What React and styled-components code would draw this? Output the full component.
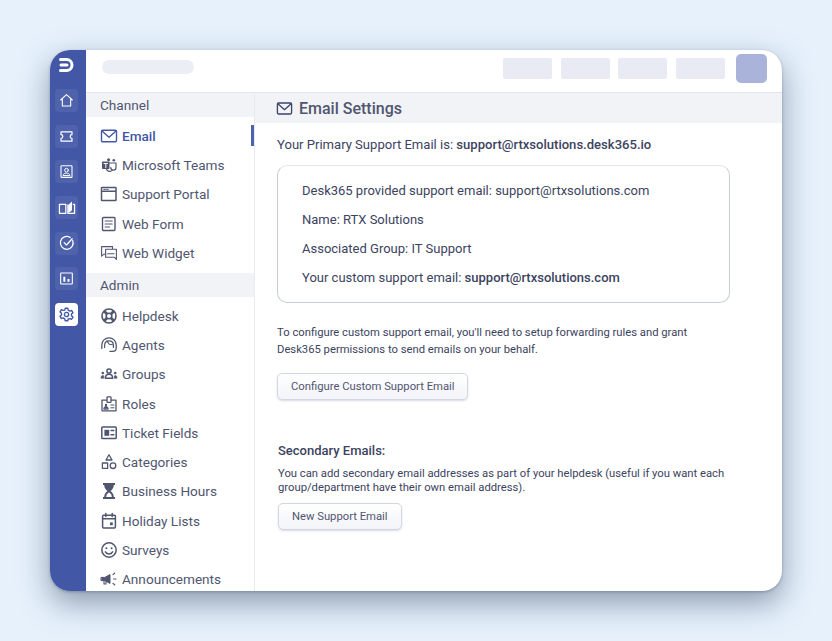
import styled, { createGlobalStyle } from "styled-components";

const GlobalStyle = createGlobalStyle`
    html, body {
        margin: 0;
        padding: 0;
        background-color: #e6f1fc;
    }
    * {
        box-sizing: border-box;
    }
`;

function Svg({ size = 18, children }) {
    return (
        <svg width={size} height={size} viewBox="0 0 18 18" fill="none" stroke="currentColor" strokeWidth="1.4" strokeLinecap="round" strokeLinejoin="round">
            {children}
        </svg>
    );
}

const MailIcon = ({ size }) => (
    <Svg size={size}>
        <rect x="1.5" y="3.2" width="15" height="11.6" rx="1.2" />
        <path d="M2 4l7 6.2L16 4" />
    </Svg>
);
const TeamsIcon = () => (
    <Svg>
        <rect x="2" y="5.5" width="7.5" height="7.5" rx="0.8" fill="currentColor" stroke="none" />
        <path d="M4 7.5h3.5M5.8 7.5v4" stroke="#fff" strokeWidth="1" />
        <path d="M9.5 7h6.5v4.5a2.6 2.6 0 0 1-5.2 0M6.5 13.2a3.4 3.4 0 0 0 5.4 1.4" strokeWidth="1.2" />
        <circle cx="8.6" cy="3.8" r="1.5" fill="currentColor" stroke="none" />
        <circle cx="13.8" cy="4.2" r="1.3" fill="currentColor" stroke="none" />
    </Svg>
);
const PortalIcon = () => (
    <Svg>
        <rect x="1.5" y="2.5" width="14.5" height="13" rx="0.6" strokeWidth="1.5" />
        <path d="M2 6.3h13.5" strokeWidth="1.5" />
        <path d="M3.8 4.4h1.6M6.6 4.4h1.6" strokeWidth="1" />
    </Svg>
);
const FormIcon = () => (
    <Svg>
        <rect x="2.5" y="2.5" width="12.5" height="13" rx="1" />
        <path d="M5.2 6h7M5.2 9h7M5.2 12h4.4" strokeWidth="1.2" />
    </Svg>
);
const WidgetIcon = () => (
    <Svg>
        <path d="M12.5 4.5V2.6H1.6v9.6l2-1.9h2.2" strokeWidth="1.1" />
        <path d="M5.6 5.2h10.8v10.2l-2.2-2.2H5.6z" strokeWidth="1.1" />
        <path d="M7.6 9.8h6.4" strokeWidth="1.1" />
    </Svg>
);
const HelpdeskIcon = () => (
    <Svg>
        <circle cx="9" cy="9" r="7" strokeWidth="1.6" />
        <circle cx="9" cy="9" r="2.8" strokeWidth="1.6" />
        <path d="M4 4l3 3M14 4l-3 3M4 14l3-3M14 14l-3-3" strokeWidth="2.6" strokeLinecap="butt" />
    </Svg>
);
const AgentIcon = () => (
    <Svg>
        <path d="M1.8 12.4V9a7.2 7.2 0 0 1 14.4 0v3.2a3.2 3.2 0 0 1-3.2 3.2H10" strokeWidth="1.3" />
        <path d="M4.6 11.4V9.2c0-2.6 1.8-4.4 4.4-4.4s4.4 1.8 4.4 4.4v2.2" strokeWidth="1.2" />
        <path d="M6.8 5l2.4 3.2 3.2.6" strokeWidth="1.1" />
    </Svg>
);
const GroupsIcon = () => (
    <Svg>
        <circle cx="9" cy="6" r="2.1" strokeWidth="1.5" />
        <path d="M5.4 13.2c0-2.6 1.5-3.9 3.6-3.9s3.600 1.300 3.600 3.900z" strokeWidth="1.5" />
        <circle cx="2.8" cy="8" r="1.3" fill="currentColor" stroke="none" />
        <circle cx="15.2" cy="8" r="1.3" fill="currentColor" stroke="none" />
        <path d="M1 13c0-1.8.6-2.6 1.800-2.600S3.800 11 3.800 13zM14.200 13c0-2 .5-2.600 1-2.600 1.200 0 1.800.8 1.800 2.600z" fill="currentColor" strokeWidth="0.6" />
    </Svg>
);
const RolesIcon = () => (
    <Svg>
        <path d="M6.6 5.2H2v10.6h14V5.2h-4.6" strokeWidth="1.3" />
        <rect x="7" y="1.8" width="4" height="5.6" rx="0.6" strokeWidth="1.3" />
        <circle cx="6" cy="10" r="1.2" fill="currentColor" stroke="none" />
        <path d="M3.8 13.8c0-1.6 1-2.2 2.2-2.2s2.2.6 2.2 2.2zM10.8 10h3.2M10.8 12.800h3.200" fill="currentColor" strokeWidth="1" />
    </Svg>
);
const FieldsIcon = () => (
    <Svg>
        <rect x="1.8" y="3" width="14.4" height="11.6" rx="0.8" strokeWidth="1.5" />
        <rect x="4.4" y="5.8" width="4.8" height="6" fill="currentColor" stroke="none" />
        <path d="M11 6.6h2.8M11 10.8h2.8" strokeWidth="1.5" />
    </Svg>
);
const CategoriesIcon = () => (
    <Svg>
        <path d="M9 1.8l3 5.200H6z" strokeWidth="1.3" />
        <rect x="2.4" y="10" width="5.2" height="5.4" strokeWidth="1.3" />
        <circle cx="13" cy="12.7" r="2.8" strokeWidth="1.3" />
    </Svg>
);
const HourglassIcon = () => (
    <svg width="18" height="18" viewBox="0 0 18 18" fill="currentColor">
        <path d="M3 1h12v2h-1.2c0 3-1.600 4.600-3.300 6 1.700 1.400 3.300 3 3.300 6H15v2H3v-2h1.200c0-3 1.600-4.600 3.300-6-1.700-1.400-3.300-3-3.300-6H3z" />
        <path d="M6.200 15c0-2 1.200-3.400 2.800-4.400 1.600 1 2.800 2.400 2.800 4.400z" fill="#fff" />
    </svg>
);
const HolidayIcon = () => (
    <Svg>
        <rect x="2.6" y="3.2" width="12.8" height="12.8" rx="1" strokeWidth="1.5" />
        <path d="M3 6.800h12M5.800 1.600v3M12.200 1.600v3" strokeWidth="1.5" />
        <rect x="10" y="10.4" width="2.8" height="2.8" fill="currentColor" stroke="none" />
    </Svg>
);
const SmileIcon = () => (
    <Svg>
        <circle cx="9" cy="9" r="7.2" strokeWidth="1.5" />
        <circle cx="6.4" cy="7.2" r="1" fill="currentColor" stroke="none" />
        <circle cx="11.6" cy="7.2" r="1" fill="currentColor" stroke="none" />
        <path d="M5.400 10.800c.9 1.600 2.100 2.200 3.600 2.200s2.700-.6 3.600-2.200" strokeWidth="1.5" />
    </Svg>
);
const MegaphoneIcon = () => (
    <Svg>
        <path d="M1.400 7.400h3.400L10 4.600v8.800L4.800 10.600H1.400z" fill="currentColor" strokeWidth="1" />
        <path d="M4 11v3h2v-2.600" strokeWidth="1.1" />
        <path d="M13 4.600l1.600-1.400M13.600 9H16M13 13.400l1.600 1.400" strokeWidth="1.2" />
    </Svg>
);

const LogoIcon = () => (
    <svg width="17" height="16" viewBox="0 0 17 16" fill="none" stroke="#fff" strokeWidth="3" strokeLinecap="round">
        <path d="M2.500 2.500h6a5.500 5.500 0 0 1 0 11h-6" />
        <path d="M3 8h6" />
    </svg>
);
const RailHome = () => (
    <Svg size={15}>
        <path d="M2 8.400L9 2l7 6.400M4 7v8.600h10V7" strokeWidth="1.3" />
    </Svg>
);
const RailTicket = () => (
    <Svg size={15}>
        <path d="M2.400 3.400h13.200v3.400a2.200 2.200 0 0 0 0 4.400v3.400H2.400v-3.400a2.200 2.200 0 0 0 0-4.400z" strokeWidth="1.4" />
    </Svg>
);
const RailContact = () => (
    <Svg size={15}>
        <rect x="2.4" y="2" width="13.2" height="14" rx="0.8" strokeWidth="1.3" />
        <circle cx="9" cy="7.4" r="2.2" strokeWidth="1.2" />
        <path d="M5 13.400c.4-1.800 2-2.400 4-2.400s3.600.6 4 2.400z" strokeWidth="1.2" />
    </Svg>
);
const RailBook = () => (
    <svg width="18" height="16" viewBox="0 0 20 18" fill="none" stroke="currentColor" strokeWidth="1.4" strokeLinejoin="round">
        <path d="M1.500 5h7.200v10H1.500zM11 5v10h7.500V5h-2" />
        <path d="M11.400 15V5.500L15.600 1.600V11.400z" fill="currentColor" stroke="none" />
    </svg>
);
const RailCheck = () => (
    <Svg size={16}>
        <path d="M15.400 6.200A7.200 7.200 0 1 1 12.600 2.800" strokeWidth="1.4" />
        <path d="M5.800 8.600l2.600 2.600 6.400-7" strokeWidth="1.4" />
    </Svg>
);
const RailChart = () => (
    <Svg size={15}>
        <rect x="2" y="2.4" width="14" height="13.2" rx="0.6" strokeWidth="1.3" />
        <path d="M6.400 13V7M11.400 13V9.600" strokeWidth="2.4" strokeLinecap="butt" />
    </Svg>
);
const RailGear = () => (
    <svg width="15" height="15" viewBox="0 0 24 24" fill="none" stroke="currentColor" strokeWidth="2.2" strokeLinejoin="round">
        <path d="M10 2h4l.7 3 2.600 1.500 3-.9 2 3.400-2.300 2.100v3l2.300 2.100-2 3.400-3-.9L14.700 19l-.7 3h-4l-.7-3-2.600-1.500-3 .9-2-3.400L4 12.900v-3L1.700 7.800l2-3.400 3 .9L9.300 5z" />
        <circle cx="12" cy="12" r="3.4" />
    </svg>
);

const railItems = [RailHome, RailTicket, RailContact, RailBook, RailCheck, RailChart];

const channelItems = [
    { label: "Email", Icon: MailIcon, active: true },
    { label: "Microsoft Teams", Icon: TeamsIcon },
    { label: "Support Portal", Icon: PortalIcon },
    { label: "Web Form", Icon: FormIcon },
    { label: "Web Widget", Icon: WidgetIcon },
];

const adminItems = [
    { label: "Helpdesk", Icon: HelpdeskIcon },
    { label: "Agents", Icon: AgentIcon },
    { label: "Groups", Icon: GroupsIcon },
    { label: "Roles", Icon: RolesIcon },
    { label: "Ticket Fields", Icon: FieldsIcon },
    { label: "Categories", Icon: CategoriesIcon },
    { label: "Business Hours", Icon: HourglassIcon },
    { label: "Holiday Lists", Icon: HolidayIcon },
    { label: "Surveys", Icon: SmileIcon },
    { label: "Announcements", Icon: MegaphoneIcon },
];

function NavList({ items }) {
    return (
        <NavGroup>
            {items.map(({ label, Icon, active }) => (
                <NavItem key={label} $active={active}>
                    <NavIcon><Icon /></NavIcon>
                    {label}
                </NavItem>
            ))}
        </NavGroup>
    );
}

export default function App() {
    return (
        <Page>
            <GlobalStyle />
            <Window>
                <Rail>
                    <Logo><LogoIcon /></Logo>
                    {railItems.map((Icon, i) => (
                        <RailButton key={i}><Icon /></RailButton>
                    ))}
                    <RailButton $active><RailGear /></RailButton>
                </Rail>
                <Body>
                    <TopBar>
                        <SearchPill />
                        <TopActions>
                            <TopAction />
                            <TopAction />
                            <TopAction />
                            <TopAction />
                            <Avatar />
                        </TopActions>
                    </TopBar>
                    <Columns>
                        <Sidebar>
                            <SectionTitle>Channel</SectionTitle>
                            <NavList items={channelItems} />
                            <SectionTitle>Admin</SectionTitle>
                            <NavList items={adminItems} />
                        </Sidebar>
                        <Main>
                            <MainHeader>
                                <MailIcon size={17} />
                                <MainTitle>Email Settings</MainTitle>
                            </MainHeader>
                            <Content>
                                <PrimaryLine>Your Primary Support Email is: <b>support@rtxsolutions.desk365.io</b></PrimaryLine>
                                <InfoBox>
                                    <InfoLine>Desk365 provided support email: support@rtxsolutions.com</InfoLine>
                                    <InfoLine>Name: RTX Solutions</InfoLine>
                                    <InfoLine>Associated Group: IT Support</InfoLine>
                                    <InfoLine>Your custom support email: <b>support@rtxsolutions.com</b></InfoLine>
                                </InfoBox>
                                <Paragraph>
                                    To configure custom support email, you'll need to setup forwarding rules and grant<br />
                                    Desk365 permissions to send emails on your behalf.
                                </Paragraph>
                                <Button>Configure Custom Support Email</Button>
                                <Secondary>
                                    <SecondaryTitle>Secondary Emails:</SecondaryTitle>
                                    <SecondaryText>
                                        You can add secondary email addresses as part of your helpdesk (useful if you want each<br />
                                        group/department have their own email address).
                                    </SecondaryText>
                                    <Button>New Support Email</Button>
                                </Secondary>
                            </Content>
                        </Main>
                    </Columns>
                </Body>
            </Window>
        </Page>
    );
}

const Page = styled.div`
    width: 832px;
    height: 641px;
    padding: 50px;
    overflow: hidden;
    background-color: #e6f1fc;
    font-family: Roboto, "Liberation Sans", sans-serif;
`;

const Window = styled.div`
    width: 732px;
    height: 541px;
    display: flex;
    border-radius: 20px;
    overflow: hidden;
    background-color: #ffffff;
    box-shadow: 0 12px 30px rgba(50, 70, 100, 0.5), 0 1px 3px rgba(50, 70, 100, 0.35);
`;

const Rail = styled.div`
    width: 36px;
    flex-shrink: 0;
    padding-right: 3px;
    display: flex;
    flex-direction: column;
    align-items: center;
    background-color: #4257a5;
`;

const Logo = styled.div`
    height: 39px;
    padding-top: 7px;
    display: flex;
    align-items: flex-start;
    justify-content: center;
`;

const RailButton = styled.div`
    width: 23px;
    height: 23px;
    margin-bottom: 12.7px;
    display: flex;
    align-items: center;
    justify-content: center;
    flex-shrink: 0;
    border-radius: 4px;
    color: ${props => props.$active ? "#4257a5" : "#ffffff"};
    background-color: ${props => props.$active ? "#ffffff" : "#4f63ad"};
`;

const Body = styled.div`
    flex: 1;
    min-width: 0;
    display: flex;
    flex-direction: column;
`;

const TopBar = styled.div`
    height: 43px;
    flex-shrink: 0;
    display: flex;
    align-items: flex-start;
    justify-content: space-between;
    border-bottom: 1px solid #e3e5ec;
`;

const SearchPill = styled.div`
    width: 92px;
    height: 14px;
    margin: 10px 0 0 16px;
    border-radius: 7px;
    background-color: #eceef5;
`;

const TopActions = styled.div`
    display: flex;
    align-items: flex-start;
    padding: 4px 15px 0 0;
`;

const TopAction = styled.div`
    width: 49px;
    height: 21px;
    margin: 4px 8.67px 0 0;
    border-radius: 2px;
    background-color: #e8ebf4;
`;

const Avatar = styled.div`
    width: 31px;
    height: 29px;
    margin-left: 2.33px;
    border-radius: 5px;
    background-color: #aab4da;
`;

const Columns = styled.div`
    flex: 1;
    min-height: 0;
    display: flex;
`;

const Sidebar = styled.div`
    width: 169px;
    flex-shrink: 0;
    overflow: hidden;
    border-right: 1px solid #e8eaf0;
`;

const SectionTitle = styled.div`
    height: 24px;
    padding-left: 14px;
    font-size: 13.6px;
    line-height: 24px;
    color: #50566f;
    background-color: #f2f3f7;
`;

const NavGroup = styled.div`
    padding: 4.1px 0 5.4px;
`;

const NavItem = styled.div`
    position: relative;
    height: 29.3px;
    display: flex;
    align-items: center;
    font-size: 13.6px;
    font-weight: ${props => props.$active ? 500 : 400};
    color: ${props => props.$active ? "#4257a5" : "#50566f"};
    ${props => props.$active && `
        &::after {
            content: "";
            position: absolute;
            top: 4px;
            right: 0;
            width: 3px;
            height: 21px;
            background-color: #4f63ad;
        }
    `}
`;

const NavIcon = styled.span`
    width: 36px;
    padding-left: 14px;
    display: flex;
    align-items: center;
    flex-shrink: 0;
`;

const Main = styled.div`
    flex: 1;
    min-width: 0;
`;

const MainHeader = styled.div`
    height: 30px;
    padding-left: 21px;
    display: flex;
    align-items: center;
    gap: 6px;
    color: #3c4468;
    background-color: #f2f3f7;
`;

const MainTitle = styled.div`
    font-size: 16px;
    font-weight: 500;
    color: #50566f;
`;

const Content = styled.div`
    padding: 14px 0 0 22px;
    color: #3c4360;
`;

const PrimaryLine = styled.div`
    font-size: 13.07px;
    line-height: 16px;
    b {
        font-weight: 500;
    }
`;

const InfoBox = styled.div`
    width: 453px;
    height: 138px;
    margin-top: 12px;
    padding: 11px 0 0 24px;
    border: 1px solid #c9cdda;
    border-top-color: #e4e6ed;
    border-radius: 10px;
`;

const InfoLine = styled.div`
    height: 29px;
    font-size: 13px;
    line-height: 28px;
    b {
        font-weight: 500;
    }
`;

const Paragraph = styled.div`
    margin: 21px 0 15px;
    font-size: 11.25px;
    line-height: 17px;
`;

const Button = styled.div`
    width: fit-content;
    height: 27px;
    padding: 0 13px;
    display: flex;
    align-items: center;
    font-size: 11.25px;
    color: #50566f;
    border: 1px solid #d3d7e4;
    border-radius: 5px;
    background: linear-gradient(#ffffff, #f3f4f9);
    box-shadow: 0 1px 2px rgba(60, 70, 110, 0.2);
`;

const Secondary = styled.div`
    margin-top: 43px;
    padding-left: 1px;
`;

const SecondaryTitle = styled.div`
    font-size: 13px;
    font-weight: 500;
    line-height: 16px;
`;

const SecondaryText = styled.div`
    margin: 8px 0 8px;
    font-size: 11.25px;
    line-height: 14px;
`;
